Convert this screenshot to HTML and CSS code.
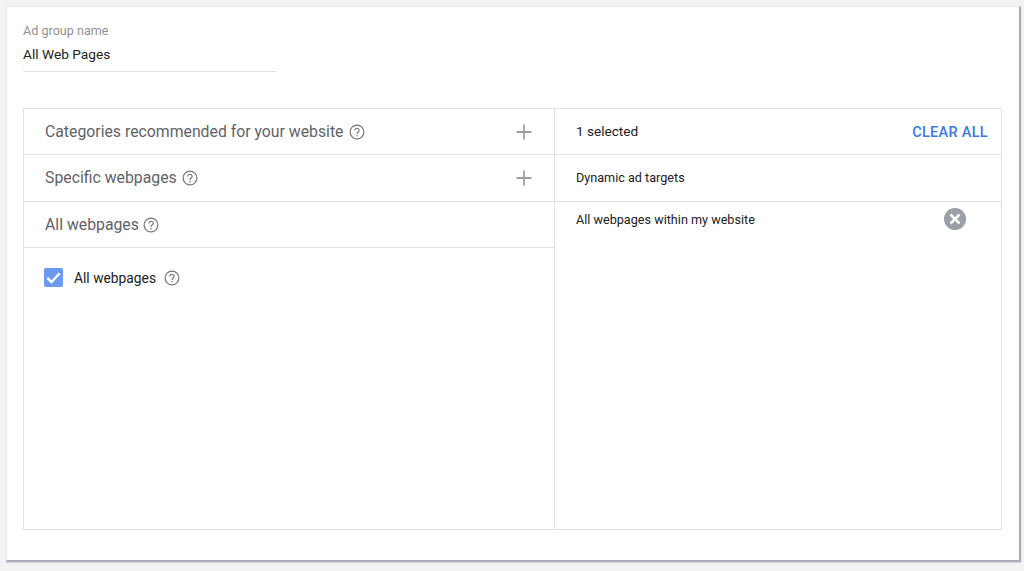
FILE: index.html
```html
<!DOCTYPE html>
<html lang="en">
<head>
<meta charset="utf-8">
<title>Ad group</title>
<link rel="stylesheet" href="styles.css">
</head>
<body>
<main class="card">
  <div class="field">
    <div class="field-label">Ad group name</div>
    <div class="field-value">All Web Pages</div>
  </div>
  <section class="panel">
    <div class="col col-left">
      <div class="row row-a">
        <span class="row-title">Categories recommended for your website</span>
        <svg class="help" viewBox="0 0 16 16"><use href="#q"/></svg>
        <svg class="plus" viewBox="0 0 16 16"><path d="M8 .5v15M.5 8h15"/></svg>
      </div>
      <div class="row row-b">
        <span class="row-title">Specific webpages</span>
        <svg class="help" viewBox="0 0 16 16"><use href="#q"/></svg>
        <svg class="plus" viewBox="0 0 16 16"><path d="M8 .5v15M.5 8h15"/></svg>
      </div>
      <div class="row row-c">
        <span class="row-title">All webpages</span>
        <svg class="help help-tight" viewBox="0 0 16 16"><use href="#q"/></svg>
      </div>
      <div class="check-row">
        <svg class="checkbox" viewBox="0 0 20 20"><rect width="20" height="20" rx="2" fill="#6b9af0"/><path d="M3.500 10.500l4.300 4.300 8.700-9.300" fill="none" stroke="#fff" stroke-width="2.600"/></svg>
        <span class="check-label">All webpages</span>
        <svg class="help help-check" viewBox="0 0 16 16"><use href="#q"/></svg>
      </div>
    </div>
    <div class="col col-right">
      <div class="row row-a right-row">
        <span class="selected">1 selected</span>
        <span class="clear">CLEAR ALL</span>
      </div>
      <div class="row row-b right-row">
        <span class="small-text">Dynamic ad targets</span>
      </div>
      <div class="target">
        <span class="small-text">All webpages within my website</span>
        <svg class="remove" viewBox="0 0 22 22"><circle cx="11" cy="11" r="11" fill="#9aa0a6"/><path d="M6.500 6.500l9 9M15.500 6.500l-9 9" stroke="#fff" stroke-width="2.600"/></svg>
      </div>
    </div>
  </section>
</main>
<svg class="defs" width="0" height="0">
  <defs>
    <g id="q">
      <circle cx="8" cy="8" r="6.900" fill="none" stroke="#757575" stroke-width="1.200"/>
      <path d="M5.900 6.400a2.100 2.100 0 1 1 3.300 1.700c-.8.600-1.200.9-1.200 1.900" fill="none" stroke="#757575" stroke-width="1.200"/>
      <circle cx="8" cy="11.700" r=".8" fill="#757575"/>
    </g>
  </defs>
</svg>
</body>
</html>
```
FILE: styles.css
```css
* { box-sizing: border-box; }
html, body { height: 100%; }
body {
  margin: 0;
  background: #f1f3f4;
  font-family: Roboto, "Liberation Sans", sans-serif;
  overflow: hidden;
  padding: 6px 3px 0 6px;
}
.card {
  height: 556px;
  background: #fff;
  border-right: 2px solid #a9adb3;
  border-bottom: 2px solid #a9adb3;
  border-left: 1px solid #e6e7e9;
  border-top: 1px solid #e6e7e9;
  padding: 16px 17px 0 16px;
  box-shadow: 0 1px 1px #d5d7da;
}
.field {
  width: 253px;
  height: 49px;
  border-bottom: 1px solid #dfe1e3;
  margin-bottom: 36px;
}
.field-label {
  font-size: 12.600px;
  line-height: 16px;
  color: #8f9296;
}
.field-value {
  font-size: 13.700px;
  line-height: 20px;
  margin-top: 5px;
  color: #202124;
}
.panel {
  display: flex;
  width: 979px;
  height: 422px;
  border: 1px solid #dfe1e3;
}
.col-left {
  width: 531px;
  border-right: 1px solid #dfe1e3;
}
.col-right { flex: 1; }
.row {
  display: flex;
  align-items: center;
  padding: 0 21px;
  border-bottom: 1px solid #dfe1e3;
}
.row-a { height: 46px; }
.row-b { height: 47px; }
.row-c { height: 46px; }
.row-title {
  font-size: 15.800px;
  color: #5f6368;
}
.row-b .row-title { margin-bottom: 1px; }
.help {
  width: 16px;
  height: 16px;
  margin-left: 5px;
  flex: none;
}
.help-tight { margin-left: 4px; }
.plus {
  width: 16px;
  height: 16px;
  margin-left: auto;
  margin-right: 1px;
  fill: none;
  stroke: #9aa0a6;
  stroke-width: 1.800;
}
.check-row {
  display: flex;
  align-items: center;
  padding: 20px 20px 0;
}
.checkbox {
  width: 19px;
  height: 19px;
}
.check-label {
  margin-left: 11px;
  font-size: 13.800px;
  color: #202124;
}
.help-check { margin-left: 8px; }
.right-row { justify-content: space-between; padding-right: 13px; }
.selected {
  font-size: 13.600px;
  line-height: 18px;
  margin-bottom: 1px;
  color: #202124;
}
.clear {
  font-size: 14.500px;
  font-weight: 500;
  letter-spacing: .3px;
  line-height: 18px;
  margin-top: 3px;
  color: #3b78e7;
}
.small-text {
  font-size: 12.640px;
  color: #202124;
}
.row-b .small-text { margin-bottom: 1px; }
.target {
  display: flex;
  align-items: flex-start;
  justify-content: space-between;
  padding: 6px 35px 0 21px;
  line-height: 24px;
}
.remove {
  width: 22px;
  height: 22px;
}
.defs { position: absolute; }
```
